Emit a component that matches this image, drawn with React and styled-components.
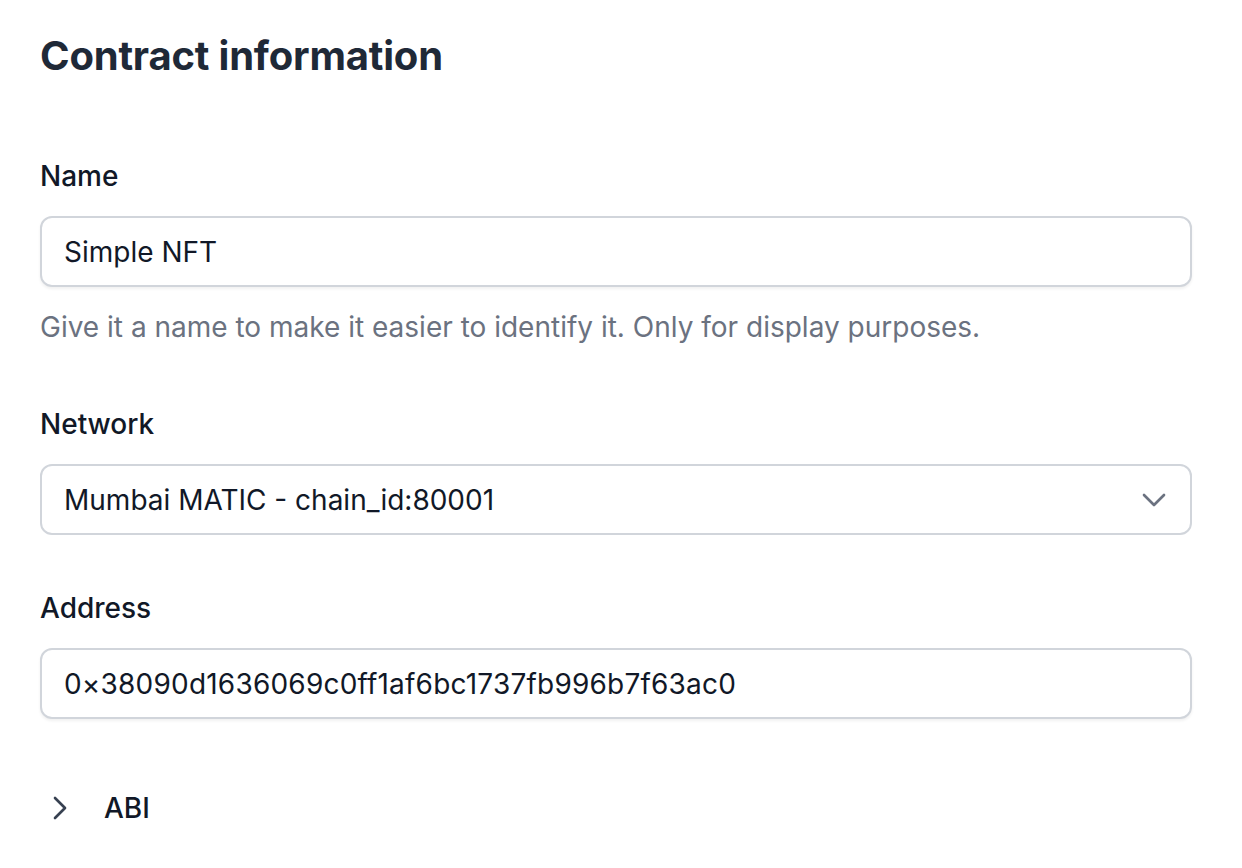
import React from "react";
import styled, { createGlobalStyle } from "styled-components";

const GlobalStyle = createGlobalStyle`
  body {
    margin: 0;
    background: #ffffff;
    font-family: Inter, "Noto Sans", sans-serif;
    -webkit-font-smoothing: antialiased;
  }
`;

const Page = styled.div`
  padding: 28px 50px 0 40px;
  display: flex;
  flex-direction: column;
`;

const Heading = styled.h1`
  margin: 0 0 72px;
  font-size: 40px;
  line-height: 56px;
  font-weight: 700;
  color: #1f2937;
  letter-spacing: -0.2px;
`;

const Field = styled.div`
  display: flex;
  flex-direction: column;
  margin-bottom: ${({ $gap }) => $gap}px;
`;

const Label = styled.label`
  font-size: 28px;
  line-height: 40px;
  font-weight: 500;
  color: #111827;
  margin-bottom: 20px;
`;

const Box = styled.div`
  height: 71px;
  box-sizing: border-box;
  border: 2px solid #d1d5db;
  border-radius: 12px;
  display: flex;
  align-items: center;
  padding: 0 16px 0 22px;
  box-shadow: ${({ $shadow }) => ($shadow ? "0 2px 3px rgba(0, 0, 0, 0.06)" : "none")};
  font-size: 28px;
  color: #111827;
  background: #ffffff;
`;

const Value = styled.span`
  flex: 1;
  letter-spacing: ${({ $spread }) => ($spread ? "0.2px" : "0")};
`;

const Helper = styled.p`
  margin: 20px 0 0;
  font-size: 28px;
  line-height: 40px;
  color: #6b7280;
`;

const Toggle = styled.div`
  display: flex;
  align-items: center;
  gap: 24px;
  font-size: 28px;
  font-weight: 500;
  color: #111827;
`;

const Chevron = ({ dir, color, size }) => (
  <svg width={size} height={size} viewBox="0 0 24 24" fill="none" stroke={color} strokeWidth="1.6" strokeLinecap="round" strokeLinejoin="round">
    {dir === "down" ? <path d="M6 9l6 6 6-6" /> : <path d="M9 6l6 6-6 6" />}
  </svg>
);

export default function App() {
  return (
    <>
      <GlobalStyle />
      <Page>
        <Heading>Contract information</Heading>
        <Field $gap={57}>
          <Label>Name</Label>
          <Box $shadow>
            <Value>Simple NFT</Value>
          </Box>
          <Helper>Give it a name to make it easier to identify it. Only for display purposes.</Helper>
        </Field>
        <Field $gap={53}>
          <Label>Network</Label>
          <Box>
            <Value>Mumbai MATIC - chain_id:80001</Value>
            <Chevron dir="down" color="#6b7280" size={40} />
          </Box>
        </Field>
        <Field $gap={69}>
          <Label>Address</Label>
          <Box $shadow>
            <Value $spread>0×38090d1636069c0ff1af6bc1737fb996b7f63ac0</Value>
          </Box>
        </Field>
        <Toggle>
          <Chevron dir="right" color="#374151" size={40} />
          <span>ABI</span>
        </Toggle>
      </Page>
    </>
  );
}
